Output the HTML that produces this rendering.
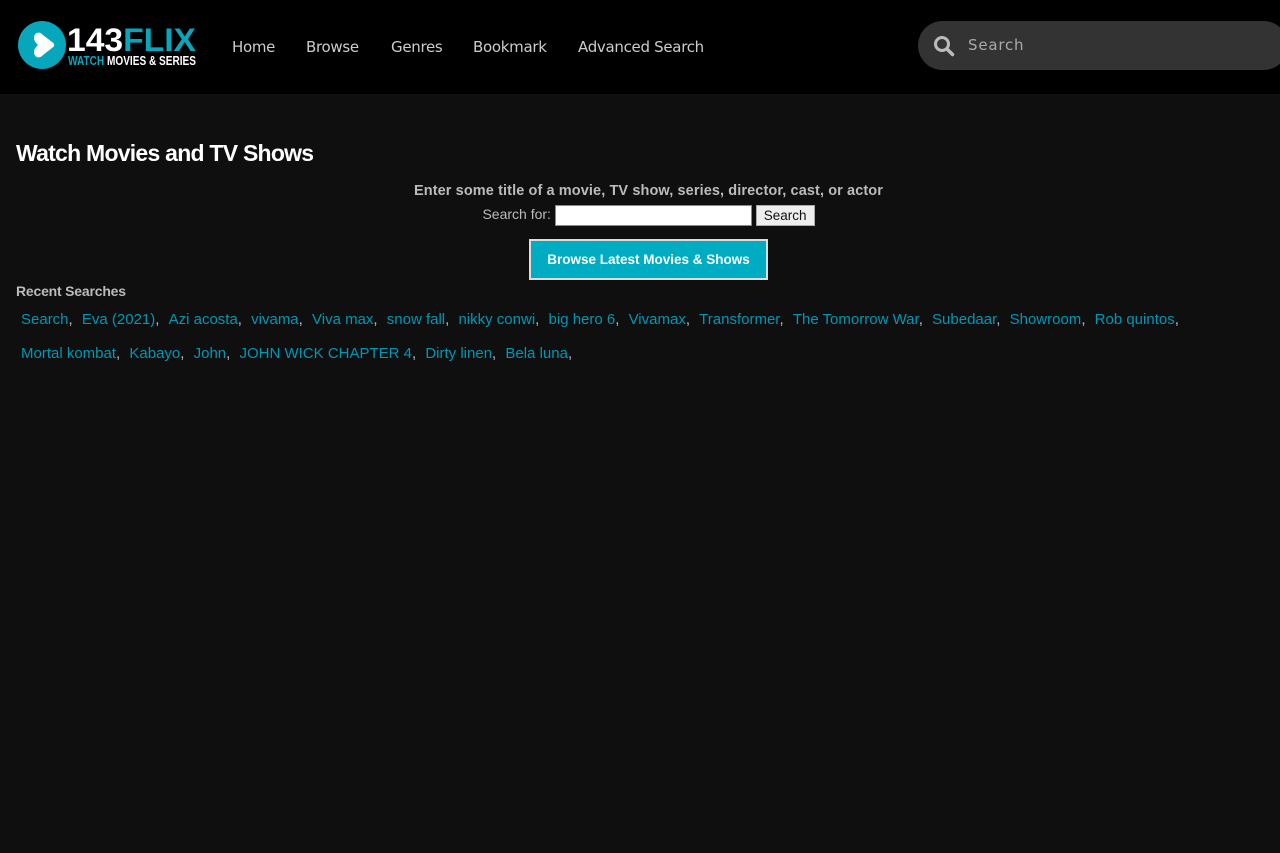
<!DOCTYPE html>
<html><head><meta charset="utf-8"><style>
*{box-sizing:border-box}
body{margin:0;background:#0f0f0f;font-family:"Liberation Sans",sans-serif;width:1280px;height:853px;overflow:hidden}
.hdr{position:absolute;left:0;top:0;width:1280px;height:94px;background:#000}
.logo{position:absolute;left:18px;top:21px}
.nav{position:absolute;top:38px;left:232px;font-family:"DejaVu Sans",sans-serif;font-size:15px;color:#ccc;letter-spacing:-0.3px}
.nav span{position:absolute;white-space:nowrap}
.srch{position:absolute;left:918px;top:21px;width:370px;height:49px;border-radius:25px;background:#333}
.srch span{position:absolute;left:50px;top:15px;color:#aaa;font-family:"DejaVu Sans",sans-serif;font-size:15px;letter-spacing:0.8px}
h1{position:absolute;left:16px;top:140px;margin:0;color:#fff;font-size:23px;font-weight:bold;letter-spacing:-0.75px}
.c{position:absolute;left:0;width:1297px;text-align:center;color:#bbb;font-size:14px}
.inp{display:inline-block;width:197px;height:21px;background:#fff;border:1px solid #888;vertical-align:middle}
.btn{display:inline-block;height:21px;padding:2px 7px;background:#eee;border:1px solid #aaa;color:#111;font-size:13.5px;vertical-align:middle}
.big{position:absolute;left:529px;top:239px;width:239px;height:41px;background:#00acc1;border:2px solid #ddd;color:#fff;font-weight:bold;font-size:13.5px;text-align:center;line-height:37px}
.rs{position:absolute;left:16px;top:283px;color:#bbb;font-weight:bold;font-size:14px;letter-spacing:-0.2px}
.links{position:absolute;left:16px;top:303px;width:1250px;font-size:15px;color:#bbb;line-height:34px;letter-spacing:0}
.links a{color:#0096b4;text-decoration:none;margin-left:5px;margin-right:0}
</style></head><body>
<div class="hdr">
<svg class="logo" width="180" height="48" viewBox="0 0 180 48">
<circle cx="24" cy="24" r="24" fill="#06a6bd"/>
<path d="M16 17 C16 11 22 10 25 14 L34 21 C37 23 37 25 34 27 L25 34 C22 38 16 37 16 31 C16 28 18 26 20 24 C18 22 16 20 16 17 Z" fill="#fff"/>
<text x="49" y="30" font-family="Liberation Sans" font-weight="bold" font-size="32" fill="#fff" textLength="129" lengthAdjust="spacingAndGlyphs">143<tspan fill="#06a6bd">FLIX</tspan></text>
<text x="50" y="44" font-family="Liberation Sans" font-weight="bold" font-size="12.5" fill="#06a6bd" textLength="128" lengthAdjust="spacingAndGlyphs">WATCH <tspan fill="#fff">MOVIES &amp; SERIES</tspan></text>
</svg>
<div class="nav"><span style="left:0">Home</span><span style="left:74px">Browse</span><span style="left:159px">Genres</span><span style="left:241px">Bookmark</span><span style="left:346px">Advanced Search</span></div>
<div class="srch"><svg style="position:absolute;left:15px;top:14px" width="22" height="22" viewBox="0 0 22 22"><circle cx="9" cy="9" r="6.5" fill="none" stroke="#bbb" stroke-width="3"/><path d="M14 14 L19.5 19.5" stroke="#bbb" stroke-width="3.5" stroke-linecap="round"/></svg><span>Search</span></div>
</div>
<h1>Watch Movies and TV Shows</h1>
<div class="c" style="top:183px;font-weight:bold;font-size:14.5px;letter-spacing:0.1px">Enter some title of a movie, TV show, series, director, cast, or actor</div>
<div class="c" style="top:205px">Search for: <span class="inp"></span> <span class="btn">Search</span></div>
<div class="big">Browse Latest Movies &amp; Shows</div>
<div class="rs">Recent Searches</div>
<div class="links"><a>Search</a>, <a>Eva (2021)</a>, <a>Azi acosta</a>, <a>vivama</a>, <a>Viva max</a>, <a>snow fall</a>, <a>nikky conwi</a>, <a>big hero 6</a>, <a>Vivamax</a>, <a>Transformer</a>, <a>The Tomorrow War</a>, <a>Subedaar</a>, <a>Showroom</a>, <a>Rob quintos</a>,<br><a>Mortal kombat</a>, <a>Kabayo</a>, <a>John</a>, <a>JOHN WICK CHAPTER 4</a>, <a>Dirty linen</a>, <a>Bela luna</a>,</div>
</body></html>
